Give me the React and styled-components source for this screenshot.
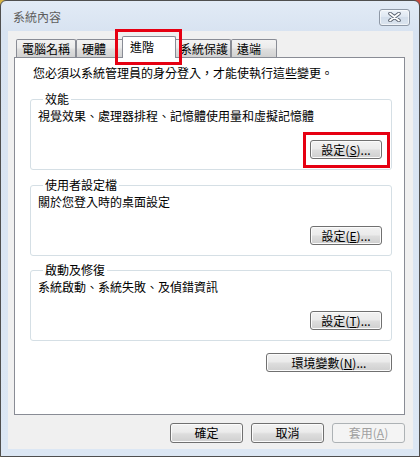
import React from "react";
import styled, { createGlobalStyle } from "styled-components";

const GlobalStyle = createGlobalStyle`
  html, body {
    margin: 0;
    padding: 0;
    background: linear-gradient(90deg, #d8b545, #c8463a);
  }
  body {
    width: 420px;
    height: 457px;
    font-family: "Noto Sans CJK TC", "Noto Sans", sans-serif;
    font-size: 12px;
    color: #000;
  }
`;

const Window = styled.div`
  box-sizing: border-box;
  width: 420px;
  height: 457px;
  border: 1px solid #4f4f4f;
  border-radius: 6px 6px 0 0;
  background: linear-gradient(#e2ebf6, #d8e3f1 30px, #dce7f4);
  padding: 0 6px 7px 7px;
  display: flex;
  flex-direction: column;
`;

const TitleBar = styled.div`
  height: 30px;
  display: flex;
  align-items: center;
  justify-content: space-between;
  padding-left: 5px;
`;

const Title = styled.span`
  color: #5e5e5e;
  font-size: 12px;
  line-height: 16px;
  margin-top: 2px;
`;

const CloseButton = styled.button`
  box-sizing: border-box;
  width: 31px;
  height: 17px;
  margin: 2px 3px 0 0;
  padding: 0;
  border: 1px solid #8e98a6;
  border-radius: 3px;
  background: linear-gradient(#eef3f9, #dde6f1 50%, #d3deeb 50%, #dbe4ef);
  box-shadow: inset 0 0 0 1px rgba(255, 255, 255, 0.6);
  display: flex;
  align-items: center;
  justify-content: center;
`;

const Client = styled.div`
  flex: 1;
  background: #f0f0f0;
  display: flex;
  flex-direction: column;
  padding: 0 8px 0 6px;
`;

const TabRow = styled.div`
  height: 26px;
  display: flex;
  align-items: flex-end;
  padding-left: 2px;
  position: relative;
  z-index: 1;
`;

const Tab = styled.div`
  position: relative;
  box-sizing: border-box;
  width: ${(p) => (p.$active ? p.$w + 4 : p.$w)}px;
  height: ${(p) => (p.$active ? 22 : 18)}px;
  margin: ${(p) => (p.$active ? "0 -2px -1px" : "0")};
  padding: ${(p) => (p.$active ? "0 5px 2px 7px" : "0 5px")};
  border: 1px solid #898c95;
  border-bottom: none;
  border-radius: 2px 2px 0 0;
  background: ${(p) =>
    p.$active
      ? "#fff"
      : "linear-gradient(#f3f3f3, #ebebeb 45%, #dedede 55%, #d2d2d2)"};
  z-index: ${(p) => (p.$active ? 2 : 0)};
  display: flex;
  align-items: center;
  line-height: 16px;
  white-space: nowrap;
`;

const Highlight = styled.span`
  position: absolute;
  top: ${(p) => p.$t}px;
  right: ${(p) => p.$r}px;
  bottom: ${(p) => p.$b}px;
  left: ${(p) => p.$l}px;
  border: 3px solid #e60012;
  pointer-events: none;
  z-index: 5;
`;

const Panel = styled.div`
  box-sizing: border-box;
  height: 358px;
  background: #fff;
  border: 1px solid #898c95;
  padding: 7px 12px 0 15px;
  display: flex;
  flex-direction: column;
`;

const Notice = styled.div`
  padding-left: 3px;
  line-height: 16px;
  margin-bottom: 10px;
`;

const Group = styled.fieldset`
  margin: ${(p) => p.$mt || 0}px 0 0 0;
  padding: 0 9px 10px 7px;
  border: 1px solid #d5dfe5;
  border-radius: 3px;
  display: flex;
  flex-direction: column;
`;

const Legend = styled.legend`
  margin-left: 5px;
  padding: 0 2px;
  line-height: 16px;
`;

const Desc = styled.div`
  line-height: 16px;
  margin: 1px 0 16px;
`;

const Row = styled.div`
  display: flex;
  justify-content: flex-end;
  margin-top: ${(p) => p.$mt || 0}px;
`;

const Button = styled.button`
  position: relative;
  box-sizing: border-box;
  width: ${(p) => p.$w}px;
  height: ${(p) => p.$h || 19}px;
  padding: 0;
  border: 1px solid ${(p) => (p.disabled ? "#adb2b5" : "#707070")};
  border-radius: 3px;
  background: ${(p) =>
    p.disabled
      ? "#f4f4f4"
      : "linear-gradient(#f2f2f2, #ebebeb 45%, #dddddd 55%, #cfcfcf)"};
  box-shadow: inset 0 0 0 1px ${(p) => (p.disabled ? "#f4f4f4" : "#fbfbfb")};
  color: ${(p) => (p.disabled ? "#a0a0a0" : "#000")};
  font-family: inherit;
  font-size: 12px;
  line-height: 16px;
  display: flex;
  align-items: center;
  justify-content: center;
  white-space: nowrap;
`;

const Footer = styled.div`
  display: flex;
  justify-content: flex-end;
  gap: 8px;
  margin-top: 8px;
`;

const CloseGlyph = () => (
  <svg width="13" height="10" viewBox="0 0 13 10">
    <path d="M2 1.5 L11 8.5 M11 1.5 L2 8.5" stroke="#5a6270" strokeWidth="3.6" strokeLinecap="round" />
    <path d="M2 1.5 L11 8.5 M11 1.5 L2 8.5" stroke="#ffffff" strokeWidth="1.8" strokeLinecap="round" />
  </svg>
);

const tabs = [
  { label: "電腦名稱", w: 60 },
  { label: "硬體", w: 48 },
  { label: "進階", w: 50, active: true },
  { label: "系統保護", w: 57 },
  { label: "遠端", w: 46 },
];

const App = () => {
  return (
    <>
      <GlobalStyle />
      <Window>
        <TitleBar>
          <Title>系統內容</Title>
          <CloseButton>
            <CloseGlyph />
          </CloseButton>
        </TitleBar>
        <Client>
          <TabRow>
            {tabs.map((t) => (
              <Tab key={t.label} $w={t.w} $active={t.active}>
                {t.label}
                {t.active && <Highlight $t={-8} $r={-7} $b={-7} $l={-8} />}
              </Tab>
            ))}
          </TabRow>
          <Panel>
            <Notice>您必須以系統管理員的身分登入，才能使執行這些變更。</Notice>

            <Group>
              <Legend>效能</Legend>
              <Desc>視覺效果、處理器排程、記憶體使用量和虛擬記憶體</Desc>
              <Row>
                <Button $w={72}>
                  設定(<u>S</u>)...
                  <Highlight $t={-9} $r={-9} $b={-10} $l={-8} />
                </Button>
              </Row>
            </Group>

            <Group $mt={7}>
              <Legend>使用者設定檔</Legend>
              <Desc>關於您登入時的桌面設定</Desc>
              <Row>
                <Button $w={72}>
                  設定(<u>E</u>)...
                </Button>
              </Row>
            </Group>

            <Group $mt={6}>
              <Legend>啟動及修復</Legend>
              <Desc>系統啟動、系統失敗、及偵錯資訊</Desc>
              <Row>
                <Button $w={72}>
                  設定(<u>T</u>)...
                </Button>
              </Row>
            </Group>

            <Row $mt={12}>
              <Button $w={126}>
                環境變數(<u>N</u>)...
              </Button>
            </Row>
          </Panel>
          <Footer>
            <Button $w={73} $h={20}>確定</Button>
            <Button $w={73} $h={20}>取消</Button>
            <Button $w={73} $h={20} disabled>
              套用(<u>A</u>)
            </Button>
          </Footer>
        </Client>
      </Window>
    </>
  );
};

export default App;
